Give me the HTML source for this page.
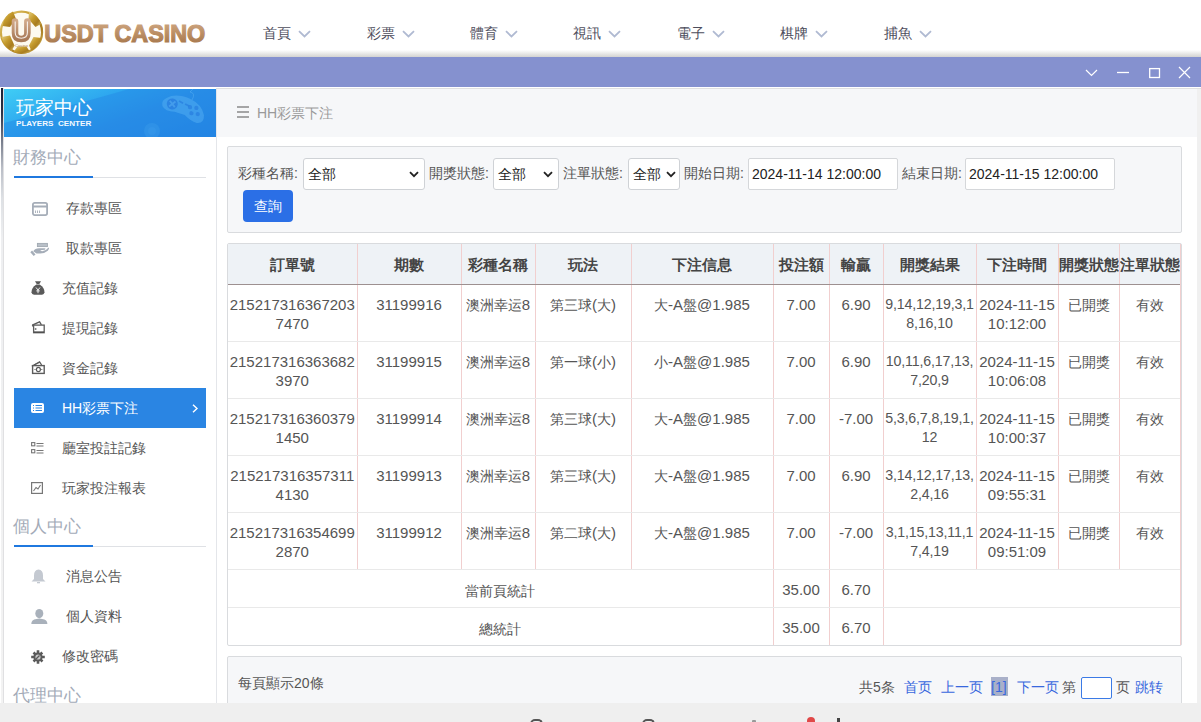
<!DOCTYPE html>
<html><head><meta charset="utf-8">
<style>
*{box-sizing:border-box}
html,body{margin:0;padding:0}
body{width:1201px;height:722px;overflow:hidden;position:relative;background:#fff;font-family:"Liberation Sans",sans-serif;color:#555}
.abs{position:absolute}
#hdr{left:0;top:0;width:1201px;height:57px;background:linear-gradient(#fff 0,#fff 50px,#d3d3d1 57px)}
.nav{position:absolute;top:24px;font-size:14px;color:#4d4d5c;line-height:18px;white-space:nowrap}
.nav svg{position:absolute;left:35px;top:6px}
#bar{left:0;top:57px;width:1201px;height:30px;background:#8591cf}
#sep{left:0;top:87px;width:1201px;height:2px;background:#fff}
#sep2{left:216px;top:88px;width:985px;height:1px;background:#e0e0e0}
#side{left:3px;top:89px;width:214px;height:614px;background:#fff;border-right:1px solid #e4e6ea}
#sidel{left:1px;top:88px;width:3px;height:615px;background:linear-gradient(90deg,rgba(255,255,255,0) 0,rgba(255,255,255,0) 66%,#e0e0e2 66%),linear-gradient(#1a2135 0,#2c3347 25px,#7c8290 55px,#b9bdc6 80px,#dde0e4 110px,#eeeff1 150px,#f3f3f3 100%)}
#sh{left:4px;top:89px;width:212px;height:48px;background:linear-gradient(160deg,#3fcdf5 0%,#2ea7ef 35%,#2a90e8 60%,#2382e2 100%);overflow:hidden}
.stitle{position:absolute;left:13px;font-size:17.2px;color:#a3abb8;line-height:20px}
.sline{position:absolute;left:14px;width:192px;height:1px;background:#dfe1e5}
.sblue{position:absolute;left:14px;width:79px;height:2px;background:#1f78df}
.item{position:absolute;left:14px;width:192px;height:40px;font-size:14px;color:#555;line-height:40px}
.item .t{position:absolute;top:0}
.item svg{position:absolute}
#crumb{left:217px;top:89px;width:984px;height:48px;background:#f6f7f9}
#main{left:217px;top:137px;width:980px;height:566px;background:#fff}
#rstrip{left:1197px;top:89px;width:4px;height:614px;background:#f0f0f0}
.panel{position:absolute;left:227px;width:955px;background:#f6f7f9;border:1px solid #d9dbde;border-radius:2px}
.lbl{position:absolute;top:164px;font-size:14px;color:#555;line-height:18px;white-space:nowrap}
.sel{position:absolute;top:158px;height:32px;background:#fff;border:1px solid #cfd2d6;border-radius:3px;font-size:14px;color:#222;line-height:30px;padding-left:4px}
.sel svg{position:absolute;right:5px;top:12px}
.inp{position:absolute;top:158px;height:32px;background:#fff;border:1px solid #d5d7da;border-radius:2px;font-size:14px;color:#222;line-height:30px;padding-left:3px;white-space:nowrap}
#btn{left:243px;top:190px;width:50px;height:32px;background:#2b6fe6;border-radius:4px;color:#fff;font-size:14px;line-height:32px;text-align:center}
#tbl{position:absolute;left:227px;top:243px;width:955px;height:403px;border:1px solid #d9dbde;border-radius:2px;overflow:hidden;background:#fff}
table{border-collapse:collapse;table-layout:fixed;width:953px;font-size:15px}
td i{font-style:normal;font-size:14px}
td.res{font-size:14.2px;letter-spacing:-0.15px}
th{font-size:14.5px}
th{height:40px;background:#eef2f6;color:#444;font-weight:bold;border-left:1px solid #f1cfcf;border-bottom:1px solid #9d9090;padding:4px 0 0;text-align:center;white-space:nowrap;overflow:hidden}
td{height:57px;border-left:1px solid #f1cfcf;border-bottom:1px solid #e9e9e9;padding:10px 0 0;vertical-align:top;text-align:center;line-height:19px;color:#555}
tr.s td{height:38px;padding:2px 0 0;vertical-align:middle}
tr.s td i{position:relative;top:2px}
th:first-child,td:first-child{border-left:none}

.pg{position:absolute;top:679px;font-size:14px;line-height:16px;white-space:nowrap}
.blue{color:#3868de}
</style></head><body>

<div id="hdr" class="abs"></div>
<!-- logo -->
<svg class="abs" style="left:0;top:0" width="210" height="57" viewBox="0 0 210 57">
  <defs>
    <linearGradient id="ballg" x1="0" y1="0" x2="1" y2="1"><stop offset="0" stop-color="#e6cf80"/><stop offset="0.4" stop-color="#c49a2c"/><stop offset="0.7" stop-color="#a87c20"/><stop offset="1" stop-color="#d8bc60"/></linearGradient>
    <linearGradient id="gold" x1="0" y1="0" x2="0" y2="1"><stop offset="0" stop-color="#d2ab86"/><stop offset="0.55" stop-color="#b98c62"/><stop offset="1" stop-color="#a27247"/></linearGradient>
    <linearGradient id="ug" x1="0" y1="0" x2="0" y2="1"><stop offset="0" stop-color="#d0a888"/><stop offset="1" stop-color="#a87a58"/></linearGradient>
  </defs>
  <circle cx="21.5" cy="32.2" r="20.6" fill="#fdfaf0" stroke="url(#ballg)" stroke-width="2.2"/>
  <g fill="url(#ballg)">
    <path d="M2.5 26 Q4 15 13 11.5 L16 19 L10 27 Z"/>
    <path d="M29 11.5 Q38 14.5 41 24 L35.5 27 L28.5 19 Z"/>
    <path d="M1.5 37 L10 35.5 L14.5 45.5 L11.5 51 Q4 46 1.5 37 Z"/>
    <path d="M41.5 38 L33.5 37 L29 45.5 L31.5 51 Q39 46 41.5 38 Z"/>
    <path d="M13.5 52 L17.5 46.5 L26.5 46.5 L30 52 Q22 55.5 13.5 52 Z"/>
  </g>
  <path d="M15 21.5 V33 Q15 39 21.2 39 Q27.4 39 27.4 33 V21.5" fill="none" stroke="url(#ug)" stroke-width="6.6" stroke-linecap="round"/>
  <path d="M15.2 21.5 V32.5 Q15.2 38.2 21.3 38.2 Q27.4 38.2 27.4 32.5 V21.5" fill="none" stroke="#fff" stroke-width="1.1" opacity="0.85"/>
  <text x="21.5" y="46.5" font-family="Liberation Sans" font-size="4.2" fill="#b08868" text-anchor="middle">Casino</text>
  <text x="44.3" y="41.6" font-family="Liberation Sans" font-weight="bold" font-size="24.6" fill="url(#gold)" stroke="url(#gold)" stroke-width="1.2" textLength="161" lengthAdjust="spacingAndGlyphs">USDT CASINO</text>
</svg>

<div class="nav" style="left:263px">首頁<svg width="13" height="8" viewBox="0 0 13 8"><path d="M1 1.2 L6.5 6.5 L12 1.2" stroke="#b0bad2" stroke-width="1.8" fill="none"/></svg></div>
<div class="nav" style="left:367px">彩票<svg width="13" height="8" viewBox="0 0 13 8"><path d="M1 1.2 L6.5 6.5 L12 1.2" stroke="#b0bad2" stroke-width="1.8" fill="none"/></svg></div>
<div class="nav" style="left:470px">體育<svg width="13" height="8" viewBox="0 0 13 8"><path d="M1 1.2 L6.5 6.5 L12 1.2" stroke="#b0bad2" stroke-width="1.8" fill="none"/></svg></div>
<div class="nav" style="left:573px">視訊<svg width="13" height="8" viewBox="0 0 13 8"><path d="M1 1.2 L6.5 6.5 L12 1.2" stroke="#b0bad2" stroke-width="1.8" fill="none"/></svg></div>
<div class="nav" style="left:677px">電子<svg width="13" height="8" viewBox="0 0 13 8"><path d="M1 1.2 L6.5 6.5 L12 1.2" stroke="#b0bad2" stroke-width="1.8" fill="none"/></svg></div>
<div class="nav" style="left:780px">棋牌<svg width="13" height="8" viewBox="0 0 13 8"><path d="M1 1.2 L6.5 6.5 L12 1.2" stroke="#b0bad2" stroke-width="1.8" fill="none"/></svg></div>
<div class="nav" style="left:884px">捕魚<svg width="13" height="8" viewBox="0 0 13 8"><path d="M1 1.2 L6.5 6.5 L12 1.2" stroke="#b0bad2" stroke-width="1.8" fill="none"/></svg></div>

<div id="bar" class="abs"></div>
<svg class="abs" style="left:1080px;top:62px" width="121" height="22" viewBox="0 0 121 22">
  <path d="M6 8 L11.5 13.5 L17 8" stroke="#fff" stroke-width="1.2" fill="none"/>
  <path d="M37 10.5 H49" stroke="#fff" stroke-width="1.3"/>
  <rect x="69.7" y="6.6" width="9.8" height="8.9" stroke="#fff" stroke-width="1.3" fill="none"/>
  <path d="M99 5 L110 16 M110 5 L99 16" stroke="#fff" stroke-width="1.2"/>
</svg>
<div id="sep" class="abs"></div><div id="sep2" class="abs"></div>

<!-- SIDEBAR -->
<div id="side" class="abs"></div>
<div id="sidel" class="abs"></div>
<div id="sh" class="abs">
  <svg class="abs" style="left:0;top:0" width="212" height="48" viewBox="0 0 212 48">
    <path d="M0 48 L0 34 Q70 16 125 0 L212 0 L212 48 Z" fill="#2387e4" opacity="0.45"/>
    <g transform="translate(158,3) rotate(7) scale(1.06)">
      <path d="M5 5 Q13 -1 27 3 Q39 7 42 17 Q43 25 36 25 Q30 24 24 19 L14 17 Q5 18 2 13 Q0 8 5 5 Z" fill="#5cb4f4" opacity="0.45"/>
      <circle cx="11" cy="10" r="5.2" fill="#2379de" opacity="0.7"/>
      <path d="M8.3 7.3 L13.7 12.7 M13.7 7.3 L8.3 12.7" stroke="#4aa2ee" stroke-width="1.8" opacity="0.8"/>
      <g fill="#2379de" opacity="0.6"><circle cx="28" cy="11" r="2"/><circle cx="34" cy="11" r="2"/><circle cx="30" cy="16.5" r="2"/><circle cx="36" cy="16.5" r="2"/></g>
      <path d="M17 6.5 L21 8 M23 8.5 L27 10" stroke="#2379de" stroke-width="1.6" opacity="0.6"/>
    </g>
    <path d="M188 11 Q192 4 186 3 L190 -1" stroke="#62b6f4" stroke-width="1" fill="none" opacity="0.4"/>
    <circle cx="148" cy="42" r="8" fill="#5bb8f5" opacity="0.16"/>
    <circle cx="148" cy="42" r="4" fill="#5bb8f5" opacity="0.12"/>
  </svg>
  <div class="abs" style="left:12px;top:8px;font-size:19px;color:#fff;line-height:22px;white-space:nowrap">玩家中心</div>
  <div class="abs" style="left:12px;top:30px;font-size:8.1px;font-weight:bold;color:#f4f9ff;line-height:10px;letter-spacing:0px;white-space:nowrap">PLAYERS&nbsp; CENTER</div>
</div>

<!-- sidebar sections -->
<div class="stitle" style="top:147px">財務中心</div>
<div class="sline" style="top:177px"></div><div class="sblue" style="top:176px"></div>

<div class="item" style="top:188px"><svg style="left:18px;top:14px" width="16" height="14" viewBox="0 0 16 14"><rect x="0.9" y="0.9" width="14.2" height="12.2" rx="1.8" fill="none" stroke="#a5adb8" stroke-width="1.8"/><rect x="1" y="3.5" width="14" height="2" fill="#a5adb8"/><path d="M3.5 8.5v2.5M5.5 8.5v2.5M7.5 8.5v2.5" stroke="#a5adb8" stroke-width="0.9"/></svg><span class="t" style="left:52px">存款專區</span></div>
<div class="item" style="top:228px"><svg style="left:16px;top:14px" width="20" height="14" viewBox="0 0 20 14"><rect x="7.4" y="1.4" width="10" height="3.2" fill="#b9c0c8" stroke="#a0a8b2" stroke-width="0.9"/><path d="M3.2 9.2 Q5 6.2 9 6.2 L14.5 6.2 Q16.4 6.6 14.8 7.8 L10.2 8.2 Q11.2 9.4 13 9.1 Q16.5 8.3 18.6 5.6 Q19.8 6.2 17.8 8.8 Q14.6 11.6 10.2 11.6 L6.5 11.6 Z" fill="#a5adb8"/><path d="M1.2 9.4 L4.6 13.2" stroke="#a5adb8" stroke-width="2.4"/></svg><span class="t" style="left:52px">取款專區</span></div>
<div class="item" style="top:268px"><svg style="left:17px;top:13px" width="14" height="14" viewBox="0 0 14 14"><path d="M4 0.3 H10 L8.3 3 H5.7 Z" fill="#5a5a5a"/><path d="M5.3 3.4 H8.7 Q13.8 7 13.5 11.3 Q13.2 13.7 11 13.7 H3 Q0.8 13.7 0.5 11.3 Q0.2 7 5.3 3.4 Z" fill="#5a5a5a"/><path d="M5 6.5 L7 9 L9 6.5 M7 9 V12.2 M5.3 9.9 H8.7" stroke="#fff" stroke-width="0.9" fill="none"/></svg><span class="t" style="left:48px">充值記錄</span></div>
<div class="item" style="top:308px"><svg style="left:17px;top:13px" width="14" height="13" viewBox="0 0 14 13"><path d="M1.2 4.2 L8.6 0.8 L10.4 3.8" fill="none" stroke="#5c5c5c" stroke-width="1.3"/><path d="M1.2 4.2 L2.6 6" fill="none" stroke="#5c5c5c" stroke-width="1.2"/><rect x="2.6" y="4.1" width="10.6" height="7.6" fill="none" stroke="#5c5c5c" stroke-width="1.3"/><path d="M3.8 7.2 h1.6 v1.6 h-1.6 z" fill="#6a6a6a"/><path d="M3 11 H13" stroke="#444" stroke-width="1.2"/></svg><span class="t" style="left:48px">提現記錄</span></div>
<div class="item" style="top:348px"><svg style="left:17px;top:13px" width="14" height="14" viewBox="0 0 14 14"><path d="M0.8 5.2 L8.6 0.9 L10.6 4" fill="none" stroke="#5c5c5c" stroke-width="1.3"/><path d="M3 3.9 L8 1.6" stroke="#5c5c5c" stroke-width="1"/><rect x="1.6" y="4.6" width="11.6" height="7.8" fill="none" stroke="#5c5c5c" stroke-width="1.4"/><ellipse cx="7.4" cy="8.5" rx="2" ry="2.1" fill="none" stroke="#5c5c5c" stroke-width="1.2"/><path d="M3.5 8.5h1M10.3 8.5h1" stroke="#5c5c5c" stroke-width="1"/></svg><span class="t" style="left:48px">資金記錄</span></div>
<div class="item" style="top:388px;background:#2a85e3;color:#fff"><svg style="left:17px;top:15px" width="13" height="10" viewBox="0 0 13 10"><rect x="0" y="0" width="13" height="10" rx="2" fill="#fff"/><path d="M2 2.5 H3 M2 5 H3 M2 7.5 H3 M4.5 2.5 H11 M4.5 5 H11 M4.5 7.5 H11" stroke="#2a85e3" stroke-width="1.1"/></svg><span class="t" style="left:48px">HH彩票下注</span><svg style="left:178px;top:16px" width="7" height="9" viewBox="0 0 7 9"><path d="M1 0.8 L5 4.5 L1 8.2" stroke="#fff" stroke-width="1.4" fill="none"/></svg></div>
<div class="item" style="top:428px"><svg style="left:17px;top:14px" width="13" height="12" viewBox="0 0 13 12"><rect x="0.6" y="0.6" width="3.2" height="3.2" fill="none" stroke="#777" stroke-width="1.1"/><rect x="0.6" y="7.6" width="3.2" height="3.2" fill="none" stroke="#777" stroke-width="1.1"/><path d="M5.5 1.5H12.5M5.5 4H12.5M5.5 8.5H12.5M5.5 11H12.5" stroke="#777" stroke-width="1.1"/></svg><span class="t" style="left:48px">廳室投註記錄</span></div>
<div class="item" style="top:468px"><svg style="left:17px;top:14px" width="12" height="12" viewBox="0 0 12 12"><rect x="0.6" y="0.6" width="10.8" height="10.8" fill="none" stroke="#777" stroke-width="1.2"/><path d="M2.5 9 L5 5.5 L7 7 L9.5 3" stroke="#777" stroke-width="1.1" fill="none"/></svg><span class="t" style="left:48px">玩家投注報表</span></div>

<div class="stitle" style="top:516px">個人中心</div>
<div class="sline" style="top:546px"></div><div class="sblue" style="top:545px"></div>
<div class="item" style="top:556px"><svg style="left:17px;top:13px" width="15" height="15" viewBox="0 0 15 15"><path d="M7.5 0.5 Q12 1 12 6.5 V10 L14.5 12.5 H0.5 L3 10 V6.5 Q3 1 7.5 0.5 Z" fill="#c4c9d1"/><rect x="6" y="13" width="3" height="1.3" fill="#c4c9d1"/></svg><span class="t" style="left:52px">消息公告</span></div>
<div class="item" style="top:596px"><svg style="left:17px;top:13px" width="17" height="15" viewBox="0 0 17 15"><ellipse cx="8.3" cy="4.6" rx="4" ry="4.6" fill="#a9b1bb"/><path d="M0.3 15 Q0.3 10.6 5.5 10 L8.3 9.6 L11.1 10 Q16.4 10.6 16.4 15 Z" fill="#a9b1bb"/></svg><span class="t" style="left:52px">個人資料</span></div>
<div class="item" style="top:636px"><svg style="left:17px;top:14px" width="14" height="14" viewBox="0 0 14 14"><g fill="#5a5a5a"><circle cx="7" cy="7" r="4.6"/><path d="M5.7 0.2h2.6v2.8H5.7zM5.7 11h2.6v2.8H5.7zM0.2 5.7h2.8v2.6H0.2zM11 5.7h2.8v2.6H11z"/><path d="M1.6 3.4l1.8-1.8 2 2-1.8 1.8zM8.6 10.4l1.8-1.8 2 2-1.8 1.8zM10.4 1.6l1.8 1.8-2 2-1.8-1.8zM1.6 10.6l2-2 1.8 1.8-2 2z"/></g><circle cx="7" cy="7" r="2.6" fill="#c9c9c9"/><path d="M5 9 L8.5 5.5" stroke="#5a5a5a" stroke-width="1.3"/></svg><span class="t" style="left:48px">修改密碼</span></div>
<div class="stitle" style="top:685px">代理中心</div>

<!-- CONTENT -->
<div id="crumb" class="abs"></div>
<div id="main" class="abs"></div>
<div id="rstrip" class="abs"></div>
<svg class="abs" style="left:237px;top:106px" width="12" height="12" viewBox="0 0 12 12"><path d="M0 1H12M0 6H12M0 11H12" stroke="#8a8a8a" stroke-width="1.6"/></svg>
<div class="abs" style="left:257px;top:104px;font-size:14px;color:#9a9a9a;line-height:18px">HH彩票下注</div>

<div class="panel" style="top:146px;height:87px"></div>
<div class="lbl" style="left:238px">彩種名稱:</div>
<div class="sel" style="left:303px;width:122px">全部<svg width="10" height="7" viewBox="0 0 10 7"><path d="M1 1.2 L5 5.2 L9 1.2" stroke="#222" stroke-width="1.8" fill="none"/></svg></div>
<div class="lbl" style="left:429px">開獎狀態:</div>
<div class="sel" style="left:493px;width:66px">全部<svg width="10" height="7" viewBox="0 0 10 7"><path d="M1 1.2 L5 5.2 L9 1.2" stroke="#222" stroke-width="1.8" fill="none"/></svg></div>
<div class="lbl" style="left:563px">注單狀態:</div>
<div class="sel" style="left:628px;width:52px">全部<svg width="10" height="7" viewBox="0 0 10 7" style="right:3px"><path d="M1 1.2 L5 5.2 L9 1.2" stroke="#222" stroke-width="1.8" fill="none"/></svg></div>
<div class="lbl" style="left:684px">開始日期:</div>
<div class="inp" style="left:748px;width:150px">2024-11-14 12:00:00</div>
<div class="lbl" style="left:902px">結束日期:</div>
<div class="inp" style="left:965px;width:150px">2024-11-15 12:00:00</div>
<div id="btn" class="abs">查詢</div>

<div id="tbl"><table><colgroup><col style="width:129px"><col style="width:104px"><col style="width:74px"><col style="width:96px"><col style="width:142px"><col style="width:56px"><col style="width:54px"><col style="width:93px"><col style="width:82px"><col style="width:61px"><col style="width:62px"></colgroup><tr><th>訂單號</th><th>期數</th><th>彩種名稱</th><th>玩法</th><th>下注信息</th><th>投注額</th><th>輸贏</th><th>開獎結果</th><th>下注時間</th><th>開獎狀態</th><th>注單狀態</th></tr>
<tr><td>215217316367203<br>7470</td><td>31199916</td><td><i>澳洲幸运</i>8</td><td><i>第三球</i>(<i>大</i>)</td><td><i>大</i>-A<i>盤</i>@1.985</td><td>7.00</td><td>6.90</td><td class="res">9,14,12,19,3,1<br>8,16,10</td><td>2024-11-15<br>10:12:00</td><td><i>已開獎</i></td><td><i>有效</i></td></tr>
<tr><td>215217316363682<br>3970</td><td>31199915</td><td><i>澳洲幸运</i>8</td><td><i>第一球</i>(<i>小</i>)</td><td><i>小</i>-A<i>盤</i>@1.985</td><td>7.00</td><td>6.90</td><td class="res">10,11,6,17,13,<br>7,20,9</td><td>2024-11-15<br>10:06:08</td><td><i>已開獎</i></td><td><i>有效</i></td></tr>
<tr><td>215217316360379<br>1450</td><td>31199914</td><td><i>澳洲幸运</i>8</td><td><i>第三球</i>(<i>大</i>)</td><td><i>大</i>-A<i>盤</i>@1.985</td><td>7.00</td><td>-7.00</td><td class="res">5,3,6,7,8,19,1,<br>12</td><td>2024-11-15<br>10:00:37</td><td><i>已開獎</i></td><td><i>有效</i></td></tr>
<tr><td>215217316357311<br>4130</td><td>31199913</td><td><i>澳洲幸运</i>8</td><td><i>第三球</i>(<i>大</i>)</td><td><i>大</i>-A<i>盤</i>@1.985</td><td>7.00</td><td>6.90</td><td class="res">3,14,12,17,13,<br>2,4,16</td><td>2024-11-15<br>09:55:31</td><td><i>已開獎</i></td><td><i>有效</i></td></tr>
<tr><td>215217316354699<br>2870</td><td>31199912</td><td><i>澳洲幸运</i>8</td><td><i>第二球</i>(<i>大</i>)</td><td><i>大</i>-A<i>盤</i>@1.985</td><td>7.00</td><td>-7.00</td><td class="res">3,1,15,13,11,1<br>7,4,19</td><td>2024-11-15<br>09:51:09</td><td><i>已開獎</i></td><td><i>有效</i></td></tr>
<tr class="s"><td colspan="5"><i>當前頁統計</i></td><td>35.00</td><td>6.70</td><td colspan="4"></td></tr>
<tr class="s"><td colspan="5"><i>總統計</i></td><td>35.00</td><td>6.70</td><td colspan="4"></td></tr>
</table></div>

<div class="abs" style="left:1180px;top:244px;width:1px;height:401px;background:#f1cfcf"></div>
<div class="panel" style="top:656px;height:60px"></div>
<div class="pg" style="left:238px;top:675px">每頁顯示20條</div>
<div class="pg" style="left:859px">共5条</div>
<div class="pg blue" style="left:904px">首页</div>
<div class="pg blue" style="left:941px">上一页</div>
<div class="abs" style="left:991px;top:677px;width:17px;height:19px;background:#a9b0c9"></div>
<div class="pg blue" style="left:991px">[1]</div>
<div class="pg blue" style="left:1017px">下一页</div>
<div class="pg" style="left:1062px">第</div>
<div class="abs" style="left:1081px;top:677px;width:31px;height:22px;border:1px solid #3b7ae6;border-radius:2px;background:#fff"></div>
<div class="pg" style="left:1116px">页</div>
<div class="pg blue" style="left:1135px">跳转</div>

<div class="abs" style="left:0;top:703px;width:1201px;height:19px;background:#efefef"></div>
<div class="abs" style="left:530px;top:719px;width:13px;height:8px;border-radius:5px 5px 0 0;border:2px solid #555;border-bottom:none"></div>
<div class="abs" style="left:642px;top:719px;width:13px;height:8px;border-radius:5px 5px 0 0;border:2px solid #555;border-bottom:none"></div>
<div class="abs" style="left:752px;top:720px;width:4px;height:3px;background:#999;border-radius:1px"></div>
<div class="abs" style="left:807px;top:717px;width:8px;height:8px;border-radius:50%;background:#e04848"></div>
<div class="abs" style="left:837px;top:718px;width:3px;height:5px;background:#444"></div>
</body></html>
